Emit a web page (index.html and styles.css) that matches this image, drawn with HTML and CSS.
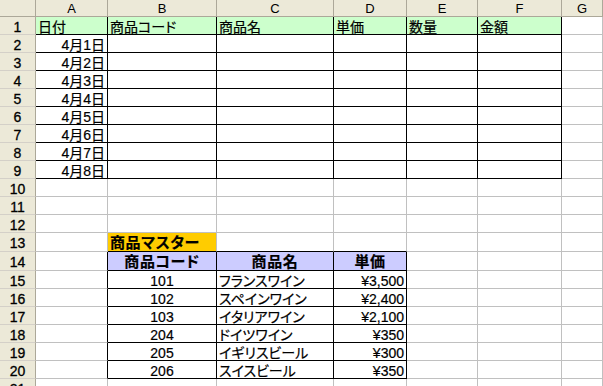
FILE: index.html
```html
<!DOCTYPE html>
<html lang="ja">
<head>
<meta charset="utf-8">
<link rel="stylesheet" href="styles.css">
</head>
<body>
<div class="sheet">
  <div class="h corner"></div><div class="h col">A</div><div class="h col">B</div><div class="h col">C</div><div class="h col">D</div><div class="h col">E</div><div class="h col">F</div><div class="h col">G</div>

  <div class="h row">1</div><div class="c k g">日付</div><div class="c k g">商品コード</div><div class="c k g">商品名</div><div class="c k g">単価</div><div class="c k g">数量</div><div class="c k g">金額</div><div class="c"></div>
  <div class="h row">2</div><div class="c k r">4月1日</div><div class="c k"></div><div class="c k"></div><div class="c k"></div><div class="c k"></div><div class="c k"></div><div class="c"></div>
  <div class="h row">3</div><div class="c k r">4月2日</div><div class="c k"></div><div class="c k"></div><div class="c k"></div><div class="c k"></div><div class="c k"></div><div class="c"></div>
  <div class="h row">4</div><div class="c k r">4月3日</div><div class="c k"></div><div class="c k"></div><div class="c k"></div><div class="c k"></div><div class="c k"></div><div class="c"></div>
  <div class="h row">5</div><div class="c k r">4月4日</div><div class="c k"></div><div class="c k"></div><div class="c k"></div><div class="c k"></div><div class="c k"></div><div class="c"></div>
  <div class="h row">6</div><div class="c k r">4月5日</div><div class="c k"></div><div class="c k"></div><div class="c k"></div><div class="c k"></div><div class="c k"></div><div class="c"></div>
  <div class="h row">7</div><div class="c k r">4月6日</div><div class="c k"></div><div class="c k"></div><div class="c k"></div><div class="c k"></div><div class="c k"></div><div class="c"></div>
  <div class="h row">8</div><div class="c k r">4月7日</div><div class="c k"></div><div class="c k"></div><div class="c k"></div><div class="c k"></div><div class="c k"></div><div class="c"></div>
  <div class="h row">9</div><div class="c k r">4月8日</div><div class="c k"></div><div class="c k"></div><div class="c k"></div><div class="c k"></div><div class="c k"></div><div class="c"></div>

  <div class="h row">10</div><div class="c"></div><div class="c"></div><div class="c"></div><div class="c"></div><div class="c"></div><div class="c"></div><div class="c"></div>
  <div class="h row">11</div><div class="c"></div><div class="c"></div><div class="c"></div><div class="c"></div><div class="c"></div><div class="c"></div><div class="c"></div>
  <div class="h row">12</div><div class="c"></div><div class="c"></div><div class="c"></div><div class="c"></div><div class="c"></div><div class="c"></div><div class="c"></div>
  <div class="h row">13</div><div class="c"></div><div class="c kb o b">商品マスター</div><div class="c kb"></div><div class="c kb"></div><div class="c"></div><div class="c"></div><div class="c"></div>
  <div class="h row">14</div><div class="c kr"></div><div class="c k lav b m">商品コード</div><div class="c k lav b m">商品名</div><div class="c k lav b m">単価</div><div class="c"></div><div class="c"></div><div class="c"></div>
  <div class="h row">15</div><div class="c kr"></div><div class="c k m">101</div><div class="c k">フランスワイン</div><div class="c k r">¥3,500</div><div class="c"></div><div class="c"></div><div class="c"></div>
  <div class="h row">16</div><div class="c kr"></div><div class="c k m">102</div><div class="c k">スペインワイン</div><div class="c k r">¥2,400</div><div class="c"></div><div class="c"></div><div class="c"></div>
  <div class="h row">17</div><div class="c kr"></div><div class="c k m">103</div><div class="c k">イタリアワイン</div><div class="c k r">¥2,100</div><div class="c"></div><div class="c"></div><div class="c"></div>
  <div class="h row">18</div><div class="c kr"></div><div class="c k m">204</div><div class="c k">ドイツワイン</div><div class="c k r">¥350</div><div class="c"></div><div class="c"></div><div class="c"></div>
  <div class="h row">19</div><div class="c kr"></div><div class="c k m">205</div><div class="c k">イギリスビール</div><div class="c k r">¥300</div><div class="c"></div><div class="c"></div><div class="c"></div>
  <div class="h row">20</div><div class="c kr"></div><div class="c k m">206</div><div class="c k">スイスビール</div><div class="c k r">¥350</div><div class="c"></div><div class="c"></div><div class="c"></div>
  <div class="h row">21</div><div class="c"></div><div class="c"></div><div class="c"></div><div class="c"></div><div class="c"></div><div class="c"></div><div class="c"></div>
</div>
</body>
</html>
```

FILE: styles.css
```css
html, body {
  margin: 0;
  padding: 0;
  background: #ffffff;
  overflow: hidden;
}

.sheet {
  display: grid;
  grid-template-columns: 36px 72px 109px 117px 73px 71px 84px 41px;
  grid-template-rows: 17px repeat(12, 18px) 19px 19px repeat(6, 18px) 18px;
  width: 603px;
  height: 386px;
  overflow: hidden;
  font-family: "Liberation Sans", "Noto Sans CJK JP", sans-serif;
  font-size: 14px;
  color: #000000;
  font-feature-settings: "palt" 1;
}

.sheet > div {
  box-sizing: border-box;
  border-right: 1px solid #c0c0c0;
  border-bottom: 1px solid #c0c0c0;
  white-space: nowrap;
  overflow: hidden;
  display: flex;
  align-items: center;
  line-height: 16px;
}

.h {
  background: #ece9d8;
  justify-content: center;
  color: #000000;
}

.sheet > .col {
  border-right: 1px solid #aca899;
  border-bottom: 1px solid #aca899;
  padding-top: 1px;
  font-size: 13px;
}

.sheet > .corner {
  border-right: 1px solid #aca899;
  border-bottom: 1px solid #aca899;
}

.sheet > .row {
  border-right: 1px solid #aca899;
  border-bottom: 1px solid #d4d0c8;
  font-size: 14px;
  padding-top: 2px;
  -webkit-text-stroke: 0.3px #000000;
}

.c {
  padding: 2px 2px 0 2px;
  -webkit-text-stroke: 0.2px #000000;
}

.sheet > .k {
  border-right-color: #000000;
  border-bottom-color: #000000;
}

.sheet > .kr {
  border-right-color: #000000;
}

.sheet > .kb {
  border-bottom-color: #000000;
}

.g {
  background: #ccffcc;
}

.o {
  background: #ffcc00;
}

.lav {
  background: #ccccff;
}

.b {
  font-weight: bold;
  font-size: 15px;
  letter-spacing: 0.6px;
}

.r {
  justify-content: flex-end;
}

.m {
  justify-content: center;
}
```
